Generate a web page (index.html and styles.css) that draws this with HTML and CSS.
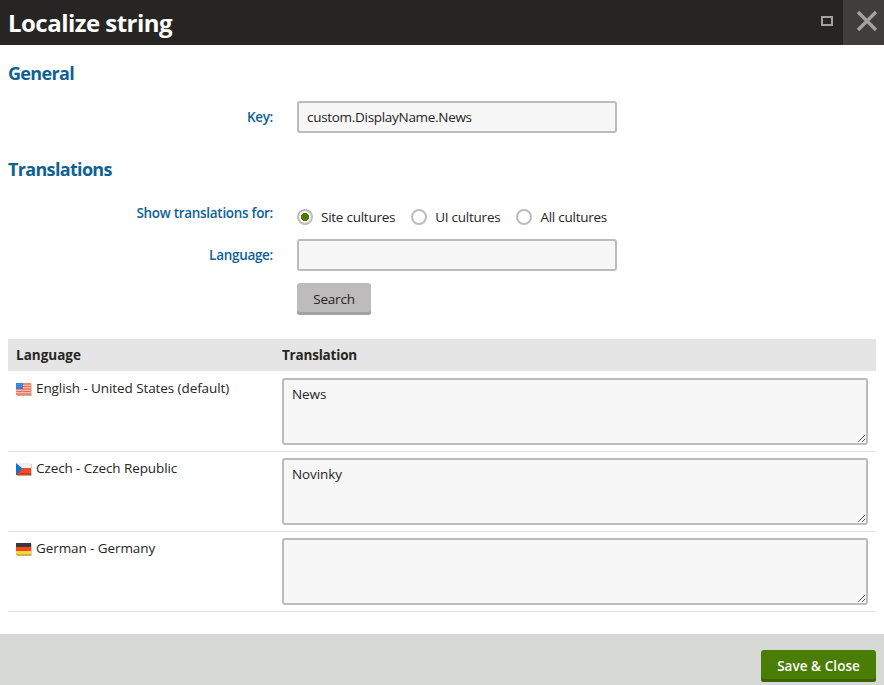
FILE: index.html
```html
<!DOCTYPE html>
<html lang="en">
<head>
<meta charset="utf-8">
<title>Localize string</title>
<link rel="stylesheet" href="styles.css">
</head>
<body>
<header class="dialog-header">
  <h1>Localize string</h1>
  <div class="window-actions">
    <button class="maximize" aria-label="Maximize"><svg width="12" height="10" viewBox="0 0 12 10"><path d="M1 1h10v8H1z" fill="none" stroke="#a3a2a2" stroke-width="2"/></svg></button>
    <button class="close" aria-label="Close"><svg width="22" height="22" viewBox="0 0 22 22"><path d="M2 2l18 18M20 2L2 20" fill="none" stroke="#a3a2a2" stroke-width="3.2"/></svg></button>
  </div>
</header>
<main class="content">
  <h2>General</h2>
  <div class="field key-field">
    <label for="key">Key:</label>
    <input class="text-input" id="key" type="text" value="custom.DisplayName.News">
  </div>
  <h2>Translations</h2>
  <div class="field radio-field">
    <span class="label">Show translations for:</span>
    <div class="radios">
      <label class="radio"><input type="radio" name="cultures" checked><span>Site cultures</span></label>
      <label class="radio"><input type="radio" name="cultures"><span>UI cultures</span></label>
      <label class="radio"><input type="radio" name="cultures"><span>All cultures</span></label>
    </div>
  </div>
  <div class="field language-field">
    <label for="language">Language:</label>
    <input class="text-input" id="language" type="text">
  </div>
  <div class="field">
    <span></span>
    <button class="button search">Search</button>
  </div>
  <div class="grid">
    <div class="grid-row grid-head"><span>Language</span><span class="head-translation">Translation</span></div>
    <div class="grid-row">
      <div class="culture">
        <svg class="flag" width="16" height="14" viewBox="0 0 16 14"><path d="M1 1h14.6v12H1z" fill="#666" opacity=".5"/><path d="M0 0h15v12H0z" fill="#fbd3c8"/><path d="M0 1h15M0 3.5h15M0 6h15M0 8.5h15M0 11h15" stroke="#f26c52" stroke-width="1.4"/><path d="M0 0h7v6H0z" fill="#3185dc"/><path d="M1 1.5h5M1 3.5h5" stroke="#66a8e8" stroke-width=".7" stroke-dasharray="1 1"/></svg>
        <span>English - United States (default)</span>
      </div>
      <textarea>News</textarea>
    </div>
    <div class="grid-row">
      <div class="culture">
        <svg class="flag" width="16" height="14" viewBox="0 0 16 14"><path d="M1 1h14.6v12H1z" fill="#666" opacity=".5"/><path d="M0 0h15v6H0z" fill="#f0f0f0"/><path d="M0 5h15v7H0z" fill="#f04a24"/><path d="M0 10h15v2H0z" fill="#d73b18"/><path d="M0 0l6.5 5.5L0 12z" fill="#1673cf"/></svg>
        <span>Czech - Czech Republic</span>
      </div>
      <textarea>Novinky</textarea>
    </div>
    <div class="grid-row">
      <div class="culture">
        <svg class="flag" width="16" height="14" viewBox="0 0 16 14"><path d="M1 1h14.6v12H1z" fill="#666" opacity=".5"/><path d="M0 0h15v4H0z" fill="#393939"/><path d="M0 4h15v4H0z" fill="#f04820"/><path d="M0 8h15v4H0z" fill="#ffd52e"/><path d="M0 11h15v1H0z" fill="#e4b600"/></svg>
        <span>German - Germany</span>
      </div>
      <textarea></textarea>
    </div>
  </div>
</main>
<footer class="dialog-footer"><button class="button save">Save &amp; Close</button></footer>
</body>
</html>
```
FILE: styles.css
```css
* { box-sizing: border-box; }
body {
  margin: 0;
  width: 884px;
  height: 685px;
  overflow: hidden;
  display: flex;
  flex-direction: column;
  background: #fff;
  color: #262524;
  font: 13.5px/20px "Open Sans", "Noto Sans", sans-serif;
}
button, input, textarea { font: inherit; color: inherit; margin: 0; }
.dialog-header {
  height: 45px;
  flex: none;
  background: #262524;
  color: #fff;
  display: flex;
  justify-content: space-between;
  padding-left: 8px;
}
h1 { margin: 0; font-size: 24px; line-height: 45px; font-weight: 700; letter-spacing: -.53px; }
.window-actions { display: flex; }
.window-actions button { border: 0; padding: 0; background: none; display: flex; align-items: center; }
.window-actions .maximize { width: 22px; padding-bottom: 3px; }
.window-actions .close { width: 41px; background: #403e3d; padding: 0 0 3px 13px; }
.content { height: 589px; flex: none; padding: 16px 8px 0; }
h2 { margin: 0; color: #0f6194; font-size: 18px; line-height: 24px; font-weight: 700; letter-spacing: -.67px; }
.field { display: grid; grid-template-columns: 265px 320px; column-gap: 24px; }
.field > label, .label { color: #0f6194; text-align: right; font-weight: 600; line-height: 33px; letter-spacing: -.3px; }
.key-field { margin: 16px 0 24px; height: 32px; }
.text-input {
  width: 320px;
  height: 32px;
  border: 2px solid #bdbbbb;
  border-radius: 3px;
  background: #f7f7f7;
  padding: 0 8px;
  outline: 0;
  letter-spacing: -.3px;
}
.radio-field { margin-top: 16px; height: 42px; }
.radios { display: flex; gap: 16px; height: 40px; align-items: center; white-space: nowrap; }
.radio { display: flex; align-items: center; gap: 8px; letter-spacing: -.25px; }
.radio input {
  appearance: none;
  width: 16px;
  height: 16px;
  flex: none;
  border: 2px solid #bdbbbb;
  border-radius: 50%;
  background: #fff;
}
.radio input:checked { background: radial-gradient(circle, #497d04 3.8px, #fff 4.3px); }
.language-field { margin-bottom: 12px; height: 32px; }
.button { border: 0; border-radius: 3px; height: 32px; padding: 0; font-weight: 600; white-space: nowrap; }
.search { width: 74px; background: #bdbbbb; box-shadow: inset 0 -3px #a3a2a2; letter-spacing: -.2px; font-weight: 500; }
.grid { margin-top: 24px; }
.grid-row { display: grid; grid-template-columns: 258px 586px; column-gap: 8px; height: 80px; padding: 6px 8px; border-bottom: 1px solid #e5e5e5; }
.grid-head { height: 32px; background: #e5e5e5; margin-bottom: 1px; font-weight: 700; border: 0; letter-spacing: 0; }
.head-translation { letter-spacing: -.2px; }
.culture { display: flex; align-items: flex-start; gap: 4px; white-space: nowrap; letter-spacing: -.09px; }
.flag { flex: none; margin-top: 5px; }
textarea {
  display: block;
  width: 586px;
  height: 67px;
  border: 2px solid #bdbbbb;
  border-radius: 3px;
  background: #f7f7f7;
  padding: 4px 8px;
  resize: both;
  outline: 0;
  letter-spacing: -.1px;
}
.dialog-footer { flex: 1; background: #d6d9d6; display: flex; justify-content: flex-end; padding: 16px 8px 0 0; }
.save { width: 115px; background: #497d04; box-shadow: inset 0 -3px #3a6403; color: #fff; letter-spacing: .05px; }
```
